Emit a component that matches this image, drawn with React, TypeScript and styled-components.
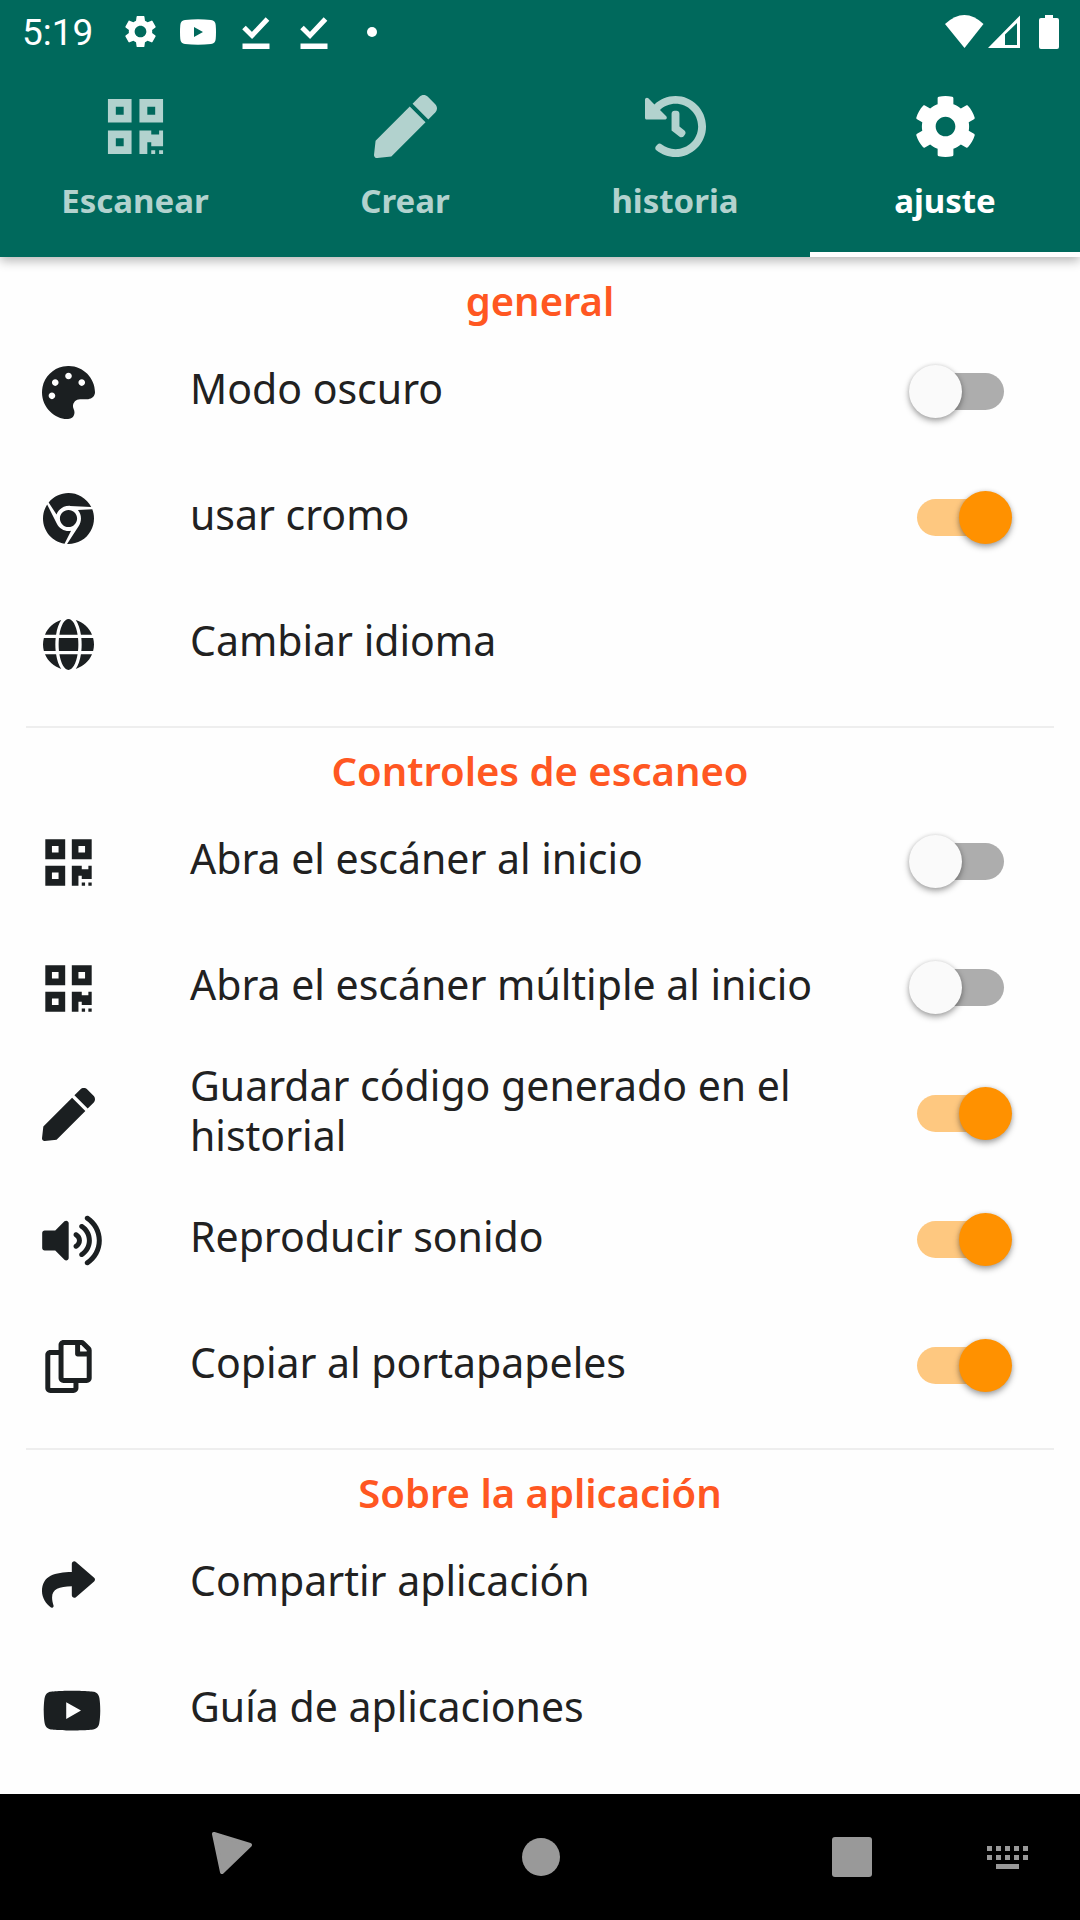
import React, { useId, useState } from 'react';
import styled, { createGlobalStyle } from 'styled-components';
import {
  FaChrome,
  FaCog,
  FaGlobe,
  FaHistory,
  FaPalette,
  FaPen,
  FaQrcode,
  FaRegCopy,
  FaShare,
  FaVolumeUp,
  FaYoutube,
} from 'react-icons/fa';
import { MdSettings } from 'react-icons/md';

const color = {
  primary: '#00695c',
  onPrimary: '#ffffff',
  onPrimaryMuted: '#b2d2ce',
  heading: '#ff5722',
  text: '#212121',
  icon: '#1b1f21',
  divider: '#eeeeee',
  surface: '#fefefe',
  accent: '#ff9100',
  accentTrack: '#fec880',
  track: '#adadad',
  thumb: '#fafafa',
  navIcon: '#999999',
};

const GlobalStyle = createGlobalStyle`
  *, *::before, *::after { box-sizing: border-box; }
  body {
    margin: 0;
    background: ${color.surface};
    color: ${color.text};
    font-family: "Noto Sans", "Open Sans", sans-serif;
  }
  button { font: inherit; color: inherit; }
`;

const Screen = styled.div`
  display: flex;
  flex-direction: column;
  min-height: 100vh;
`;

const Header = styled.header`
  position: relative;
  background: ${color.primary};
  color: ${color.onPrimary};
  box-shadow: 0 4px 10px rgba(0, 0, 0, 0.28);
`;

const StatusBar = styled.div`
  display: flex;
  align-items: center;
  justify-content: space-between;
  height: 63px;
  padding: 0 21px 0 22px;
`;

const StatusGroup = styled.div`
  display: flex;
  align-items: center;
`;

const StatusSlot = styled.span`
  display: flex;
  justify-content: center;
  width: 58px;
`;

const SystemIcons = styled.div`
  display: flex;
  align-items: center;
  gap: 18px;
`;

const Clock = styled.time`
  margin-right: 18px;
  padding-top: 2px;
  font-family: Roboto, sans-serif;
  font-size: 37px;
  line-height: 40px;
`;

const Tabs = styled.div`
  display: grid;
  grid-template-columns: repeat(4, 1fr);
`;

const Tab = styled.button<{ $active: boolean }>`
  display: flex;
  flex-direction: column;
  align-items: center;
  gap: 20px;
  height: 194px;
  padding: 32px 0 0;
  border: 0;
  border-bottom: 5px solid ${(p) => (p.$active ? color.onPrimary : 'transparent')};
  background: none;
  color: ${(p) => (p.$active ? color.onPrimary : color.onPrimaryMuted)};
  font-size: 33px;
  font-weight: 700;
  line-height: 46px;

  svg {
    width: auto;
    height: 63px;
  }
`;

const Content = styled.main`
  flex: 1;
  padding-top: 1px;
`;

const Section = styled.section`
  & + & {
    margin: 20px 26px 0;
    border-top: 2px solid ${color.divider};
  }
`;

const Heading = styled.h2`
  margin: 0;
  padding: 18px 0 2px;
  color: ${color.heading};
  font-size: 40px;
  font-weight: 600;
  line-height: 50px;
  text-align: center;
`;

const List = styled.ul`
  margin: 0;
  padding: 0;
  list-style: none;

  ${Section} + ${Section} & {
    margin: 0 -26px;
  }
`;

const rowLayout = `
  display: flex;
  align-items: center;
  gap: 96px;
  width: 100%;
  height: 126px;
  padding: 0 68px 0 42px;
  cursor: pointer;
`;

const ToggleRow = styled.label`
  ${rowLayout}
`;

const ActionRow = styled.button`
  ${rowLayout}
  border: 0;
  background: none;
  text-align: left;
`;

type IconShape = 'square' | 'narrow' | 'wide';
const iconWidth: Record<IconShape, number> = { square: 53, narrow: 51, wide: 60 };

const IconSlot = styled.span<{ $shape: IconShape }>`
  display: flex;
  flex: none;
  justify-content: safe center;
  width: 52px;
  padding-top: 2px;
  color: ${color.icon};

  svg {
    flex: none;
    width: ${(p) => iconWidth[p.$shape]}px;
    height: 53px;
  }
`;

const RowText = styled.span`
  flex: 1;
  padding-bottom: 6px;
  font-size: 41px;
  line-height: 50px;
`;

const Switch = styled.input`
  position: relative;
  flex: none;
  width: 103px;
  height: 53px;
  margin: 0;
  appearance: none;
  cursor: pointer;

  &::before,
  &::after {
    content: '';
    position: absolute;
  }

  &::before {
    inset: 8px;
    border-radius: 19px;
    background: ${color.track};
  }

  &::after {
    top: 0;
    left: 0;
    width: 53px;
    height: 53px;
    border-radius: 50%;
    background: ${color.thumb};
    box-shadow: 0 3px 6px rgba(0, 0, 0, 0.35), 0 0 4px rgba(0, 0, 0, 0.1);
  }

  &:checked::before {
    background: ${color.accentTrack};
  }

  &:checked::after {
    left: 50px;
    background: ${color.accent};
  }
`;

const NavBar = styled.nav`
  display: grid;
  grid-template-columns: 146fr 167fr 455fr 167fr 145fr;
  height: 126px;
  background: #000000;
  color: ${color.navIcon};
`;

const NavButton = styled.button<{ $first?: boolean }>`
  display: flex;
  align-items: center;
  justify-content: center;
  grid-column: ${(p) => (p.$first ? '2' : 'auto')};
  padding: 0;
  border: 0;
  background: none;
`;

const CheckLine = () => (
  <svg width="28" height="34" viewBox="0 0 28 34" aria-hidden="true">
    <path d="M2 12.5l8 8L25.500 4" fill="none" stroke="currentColor" strokeWidth="5" />
    <path d="M0.500 28.500h27v5.500h-27z" fill="currentColor" />
  </svg>
);

const Dot = () => (
  <svg width="10" height="10" viewBox="0 0 10 10" aria-hidden="true">
    <circle cx="5" cy="5" r="5" fill="currentColor" />
  </svg>
);

const StatusVideo = () => (
  <svg width="36" height="26" viewBox="0 0 36 26" aria-hidden="true">
    <path
      fillRule="evenodd"
      fill="currentColor"
      d="M5 1Q18-.4 31 1Q35.400 1.500 35.700 6Q36.300 13 35.700 20Q35.400 24.500 31 25Q18 26.400 5 25Q.6 24.500 .3 20Q-.3 13 .3 6Q.6 1.500 5 1zM14 8v10l9-5z"
    />
  </svg>
);

const SignalIcons = () => (
  <svg width="76" height="34" viewBox="0 0 76 34" aria-hidden="true">
    <path d="M0 9Q19.500-9 38.500 9L19.500 33z" fill="currentColor" />
    <path
      fillRule="evenodd"
      d="M43 33L75 .5V33zM60 19.500V30h12V8z"
      fill="currentColor"
    />
  </svg>
);

const Battery = () => (
  <svg width="20" height="34" viewBox="0 0 20 34" aria-hidden="true">
    <path
      d="M6 0h8v3h4q2 0 2 2v27q0 2-2 2H2q-2 0-2-2V5q0-2 2-2h4z"
      fill="currentColor"
    />
  </svg>
);

const BackGlyph = () => (
  <svg width="47" height="50" viewBox="-5 1 47 50" aria-hidden="true">
    <path
      d="M3 3L39 14L11 41z"
      fill="currentColor"
      stroke="currentColor"
      strokeWidth="4"
      strokeLinejoin="round"
    />
  </svg>
);

const HomeGlyph = () => (
  <svg width="38" height="38" viewBox="0 0 38 38" aria-hidden="true">
    <circle cx="19" cy="19" r="19" fill="currentColor" />
  </svg>
);

const RecentsGlyph = () => (
  <svg width="40" height="40" viewBox="0 0 40 40" aria-hidden="true">
    <rect width="40" height="40" rx="3" fill="currentColor" />
  </svg>
);

const KeyboardGlyph = () => (
  <svg width="41" height="23" viewBox="0 0 41 23" aria-hidden="true">
    {[0, 9, 18, 27, 36].map((x) => (
      <React.Fragment key={x}>
        <rect x={x} y="0" width="5" height="5" fill="currentColor" />
        <rect x={x} y="9" width="5" height="5" fill="currentColor" />
      </React.Fragment>
    ))}
    <rect x="9" y="18" width="23" height="5" fill="currentColor" />
  </svg>
);

type RowProps = { icon: React.ReactNode; label: string; shape?: IconShape };

function Toggle({ icon, label, shape = 'square', initial }: RowProps & { initial: boolean }) {
  const id = useId();
  const [on, setOn] = useState(initial);
  return (
    <li>
      <ToggleRow htmlFor={id}>
        <IconSlot $shape={shape}>{icon}</IconSlot>
        <RowText>{label}</RowText>
        <Switch id={id} type="checkbox" checked={on} onChange={() => setOn(!on)} />
      </ToggleRow>
    </li>
  );
}

function Action({ icon, label, shape = 'square' }: RowProps) {
  return (
    <li>
      <ActionRow type="button">
        <IconSlot $shape={shape}>{icon}</IconSlot>
        <RowText>{label}</RowText>
      </ActionRow>
    </li>
  );
}

const notifications = [
  <MdSettings size={39} />,
  <StatusVideo />,
  <CheckLine />,
  <CheckLine />,
  <Dot />,
];

const tabs = [
  { label: 'Escanear', icon: <FaQrcode /> },
  { label: 'Crear', icon: <FaPen /> },
  { label: 'historia', icon: <FaHistory /> },
  { label: 'ajuste', icon: <FaCog /> },
];

export default function App() {
  const [active, setActive] = useState(3);

  return (
    <Screen>
      <GlobalStyle />
      <Header>
        <StatusBar>
          <StatusGroup>
            <Clock>5:19</Clock>
            {notifications.map((icon, i) => (
              <StatusSlot key={i}>{icon}</StatusSlot>
            ))}
          </StatusGroup>
          <SystemIcons>
            <SignalIcons />
            <Battery />
          </SystemIcons>
        </StatusBar>
        <Tabs role="tablist">
          {tabs.map((tab, i) => (
            <Tab
              key={tab.label}
              type="button"
              role="tab"
              aria-selected={i === active}
              $active={i === active}
              onClick={() => setActive(i)}
            >
              {tab.icon}
              {tab.label}
            </Tab>
          ))}
        </Tabs>
      </Header>

      <Content>
        <Section>
          <Heading>general</Heading>
          <List>
            <Toggle icon={<FaPalette />} label="Modo oscuro" initial={false} />
            <Toggle icon={<FaChrome />} shape="narrow" label="usar cromo" initial />
            <Action icon={<FaGlobe />} shape="narrow" label="Cambiar idioma" />
          </List>
        </Section>
        <Section>
          <Heading>Controles de escaneo</Heading>
          <List>
            <Toggle
              icon={<FaQrcode />}
              shape="narrow"
              label="Abra el escáner al inicio"
              initial={false}
            />
            <Toggle
              icon={<FaQrcode />}
              shape="narrow"
              label="Abra el escáner múltiple al inicio"
              initial={false}
            />
            <Toggle icon={<FaPen />} label="Guardar código generado en el historial" initial />
            <Toggle icon={<FaVolumeUp />} shape="wide" label="Reproducir sonido" initial />
            <Toggle icon={<FaRegCopy />} shape="narrow" label="Copiar al portapapeles" initial />
          </List>
        </Section>
        <Section>
          <Heading>Sobre la aplicación</Heading>
          <List>
            <Action icon={<FaShare />} label="Compartir aplicación" />
            <Action icon={<FaYoutube />} shape="wide" label="Guía de aplicaciones" />
          </List>
        </Section>
      </Content>

      <NavBar>
        <NavButton type="button" aria-label="Atrás" $first>
          <BackGlyph />
        </NavButton>
        <NavButton type="button" aria-label="Inicio">
          <HomeGlyph />
        </NavButton>
        <NavButton type="button" aria-label="Recientes">
          <RecentsGlyph />
        </NavButton>
        <NavButton type="button" aria-label="Teclado">
          <KeyboardGlyph />
        </NavButton>
      </NavBar>
    </Screen>
  );
}
